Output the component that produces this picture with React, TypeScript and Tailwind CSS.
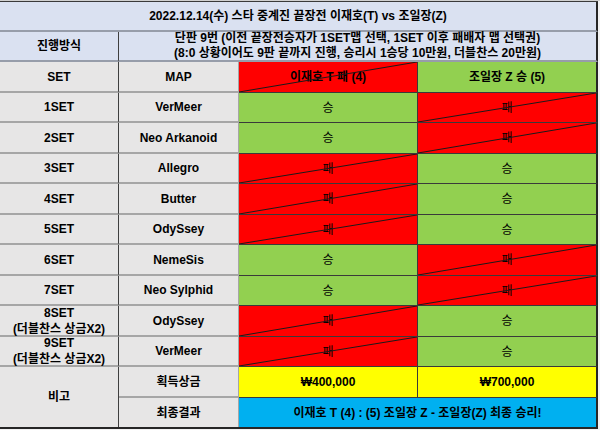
import React from "react"

type Result = "승" | "패"

interface SetRow {
  set: string
  sub?: string
  map: string
  t: Result
  z: Result
}

const sets: SetRow[] = [
  { set: "1SET", map: "VerMeer", t: "승", z: "패" },
  { set: "2SET", map: "Neo Arkanoid", t: "승", z: "패" },
  { set: "3SET", map: "Allegro", t: "패", z: "승" },
  { set: "4SET", map: "Butter", t: "패", z: "승" },
  { set: "5SET", map: "OdySsey", t: "패", z: "승" },
  { set: "6SET", map: "NemeSis", t: "승", z: "패" },
  { set: "7SET", map: "Neo Sylphid", t: "승", z: "패" },
  { set: "8SET", sub: "(더블찬스 상금X2)", map: "OdySsey", t: "패", z: "승" },
  { set: "9SET", sub: "(더블찬스 상금X2)", map: "VerMeer", t: "패", z: "승" },
]

const font = { fontFamily: '"Liberation Sans", "Noto Sans CJK KR", sans-serif' }

const grayCell =
  "bg-[#e7e6e6] border-b-2 border-b-[#a6a6a6] flex items-center justify-center text-center font-bold text-[12px] leading-[16px]"

// 패 cells get a thin diagonal line from bottom-left to top-right
function Diagonal() {
  return (
    <svg className="absolute inset-0 w-full h-full pointer-events-none" preserveAspectRatio="none" viewBox="0 0 100 100">
      <line x1="0" y1="100" x2="100" y2="0" stroke="#1a1a1a" strokeWidth="1" vectorEffect="non-scaling-stroke" />
    </svg>
  )
}

function ResultCell({ r, last }: { r: Result; last?: boolean }) {
  return (
    <div
      className={
        "relative flex items-center justify-center text-[12px] border-b border-b-[#3a3a3a] " +
        (last ? "border-r-2 border-r-[#262626] " : "border-r border-r-[#3a3a3a] ") +
        (r === "승" ? "bg-[#92d050]" : "bg-[#ff0000]")
      }
    >
      <span className="relative">{r}</span>
      {r === "패" && <Diagonal />}
    </div>
  )
}

export default function App() {
  return (
    <div className="w-[600px] h-[430px] bg-[#f2f2f2] text-black" style={font}>
      <div className="h-[1px] bg-[#d0d0d0]" />
      <div className="w-[598px] border-t border-t-[#3a3a3a] border-b-2 border-b-[#262626] grid grid-cols-[119px_120px_179px_180px] grid-rows-[30px_30px_31px_30px_31px_30px_31px_30px_31px_30px_31px_30px_31px_29px]">
        {/* title */}
        <div className="col-span-4 bg-[#dae1f1] border-b-2 border-b-[#979daa] border-r-2 border-r-[#262626] flex items-center justify-center font-bold text-[12px]">
          2022.12.14(수) 스타 중계진 끝장전 이재호(T) vs 조일장(Z)
        </div>

        {/* rules */}
        <div className="bg-[#dae1f1] border-b-2 border-b-[#979daa] border-r border-r-[#3f3f3f] flex items-center justify-center font-bold text-[12px]">
          진행방식
        </div>
        <div className="col-span-3 bg-[#dae1f1] border-b-2 border-b-[#979daa] border-r-2 border-r-[#262626] flex flex-col items-center justify-center font-bold text-[12px] leading-[15px]">
          <span>단판 9번 (이전 끝장전승자가 1SET맵 선택, 1SET 이후 패배자 맵 선택권)</span>
          <span>(8:0 상황이어도 9판 끝까지 진행, 승리시 1승당 10만원, 더블찬스 20만원)</span>
        </div>

        {/* header */}
        <div className={grayCell + " border-r border-r-[#3f3f3f]"}>SET</div>
        <div className={grayCell + " border-r border-r-[#a6a6a6]"}>MAP</div>
        <div className="relative bg-[#ff0000] border-b border-b-[#3a3a3a] border-r border-r-[#3a3a3a] flex items-center justify-center font-bold text-[12px]">
          <span className="relative">이재호 T 패 (4)</span>
          <Diagonal />
        </div>
        <div className="bg-[#92d050] border-b border-b-[#3a3a3a] border-r-2 border-r-[#262626] flex items-center justify-center font-bold text-[12px]">
          조일장 Z 승 (5)
        </div>

        {sets.map((s) => (
          <React.Fragment key={s.set}>
            <div className={grayCell + " flex-col border-r border-r-[#3f3f3f]"}>
              <span>{s.set}</span>
              {s.sub && <span>{s.sub}</span>}
            </div>
            <div className={grayCell + " border-r border-r-[#a6a6a6]"}>{s.map}</div>
            <ResultCell r={s.t} />
            <ResultCell r={s.z} last />
          </React.Fragment>
        ))}

        {/* notes */}
        <div className="row-span-2 bg-[#e7e6e6] border-r border-r-[#3f3f3f] flex items-center justify-center font-bold text-[12px]">
          비고
        </div>
        <div className={grayCell + " border-r border-r-[#a6a6a6]"}>획득상금</div>
        <div className="bg-[#ffff00] border-b border-b-[#3a3a3a] border-r border-r-[#3a3a3a] flex items-center justify-center font-bold text-[12px]">
          ₩400,000
        </div>
        <div className="bg-[#ffff00] border-b border-b-[#3a3a3a] border-r-2 border-r-[#262626] flex items-center justify-center font-bold text-[12px]">
          ₩700,000
        </div>
        <div className="bg-[#e7e6e6] border-r border-r-[#a6a6a6] flex items-center justify-center font-bold text-[12px]">
          최종결과
        </div>
        <div className="col-span-2 bg-[#00b0f0] border-r-2 border-r-[#262626] flex items-center justify-center font-bold text-[12px]">
          이재호 T (4) : (5) 조일장 Z - 조일장(Z) 최종 승리!
        </div>
      </div>
    </div>
  )
}
